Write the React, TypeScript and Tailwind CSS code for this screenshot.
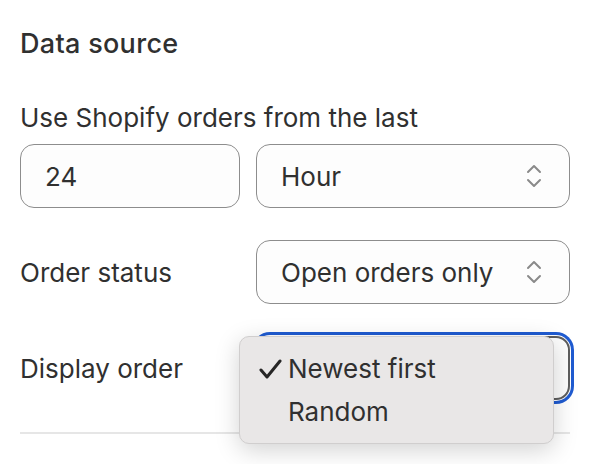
import React from 'react';

const Chevrons: React.FC = () => (
  <svg width="16" height="26" viewBox="0 0 16 26" fill="none" stroke="#8a8a8a" strokeWidth="2" strokeLinecap="round" strokeLinejoin="round">
    <path d="M2 9 L8 3 L14 9" />
    <path d="M2 17 L8 23 L14 17" />
  </svg>
);

const SelectBox: React.FC<{ value?: string; focused?: boolean }> = ({ value, focused }) => (
  <div
    className={`h-16 w-[314px] rounded-[14px] bg-[#fdfdfd] flex items-center justify-between pl-6 pr-[27px] ${
      focused ? 'border-2 border-[#5e5e5e] shadow-[0_0_0_1px_#ffffff,0_0_0_4px_#1f5bd1]' : 'border border-[#8d8d8d]'
    }`}
  >
    <span>{value}</span>
    <Chevrons />
  </div>
);

const App: React.FC = () => {
  return (
    <div
      className="w-[592px] h-[464px] bg-white text-[#303030] overflow-hidden"
      style={{ fontFamily: 'Inter, "Noto Sans", sans-serif' }}
    >
      <div className="ml-5 w-[550px] pt-[28px] text-[26px]">
        <h2 className="text-[27px] leading-[32px] font-medium tracking-[0.3px]">Data source</h2>

        <div className="mt-[42px] leading-[32px]">Use Shopify orders from the last</div>

        <div className="mt-[10px] flex gap-4">
          <div className="h-16 w-[220px] rounded-[14px] border border-[#8d8d8d] bg-[#fdfdfd] flex items-center pl-6">
            24
          </div>
          <SelectBox value="Hour" />
        </div>

        <div className="mt-8 flex items-center justify-between">
          <span>Order status</span>
          <SelectBox value="Open orders only" />
        </div>

        <div className="mt-8 flex items-center justify-between relative">
          <span>Display order</span>
          <SelectBox focused />

          {/* open dropdown menu */}
          <div className="absolute left-[219px] top-0 w-[315px] h-[108px] rounded-[10px] bg-[#e9e7e7] border border-[#d0cece] shadow-[0_6px_24px_rgba(0,0,0,0.18)] flex flex-col justify-center gap-[11px]">
            <div className="flex items-center h-8">
              <svg className="ml-[19px] mr-[6px]" width="23" height="20" viewBox="0 0 23 20" fill="none" stroke="#262626" strokeWidth="3" strokeLinecap="round" strokeLinejoin="round">
                <path d="M2 11 L8 18 L21 2" />
              </svg>
              <span>Newest first</span>
            </div>
            <div className="flex items-center h-8 pl-[48px]">Random</div>
          </div>
        </div>

        <div className="mt-8 h-[2px] bg-[#e6e6e6]" />
      </div>
    </div>
  );
};

export default App;
